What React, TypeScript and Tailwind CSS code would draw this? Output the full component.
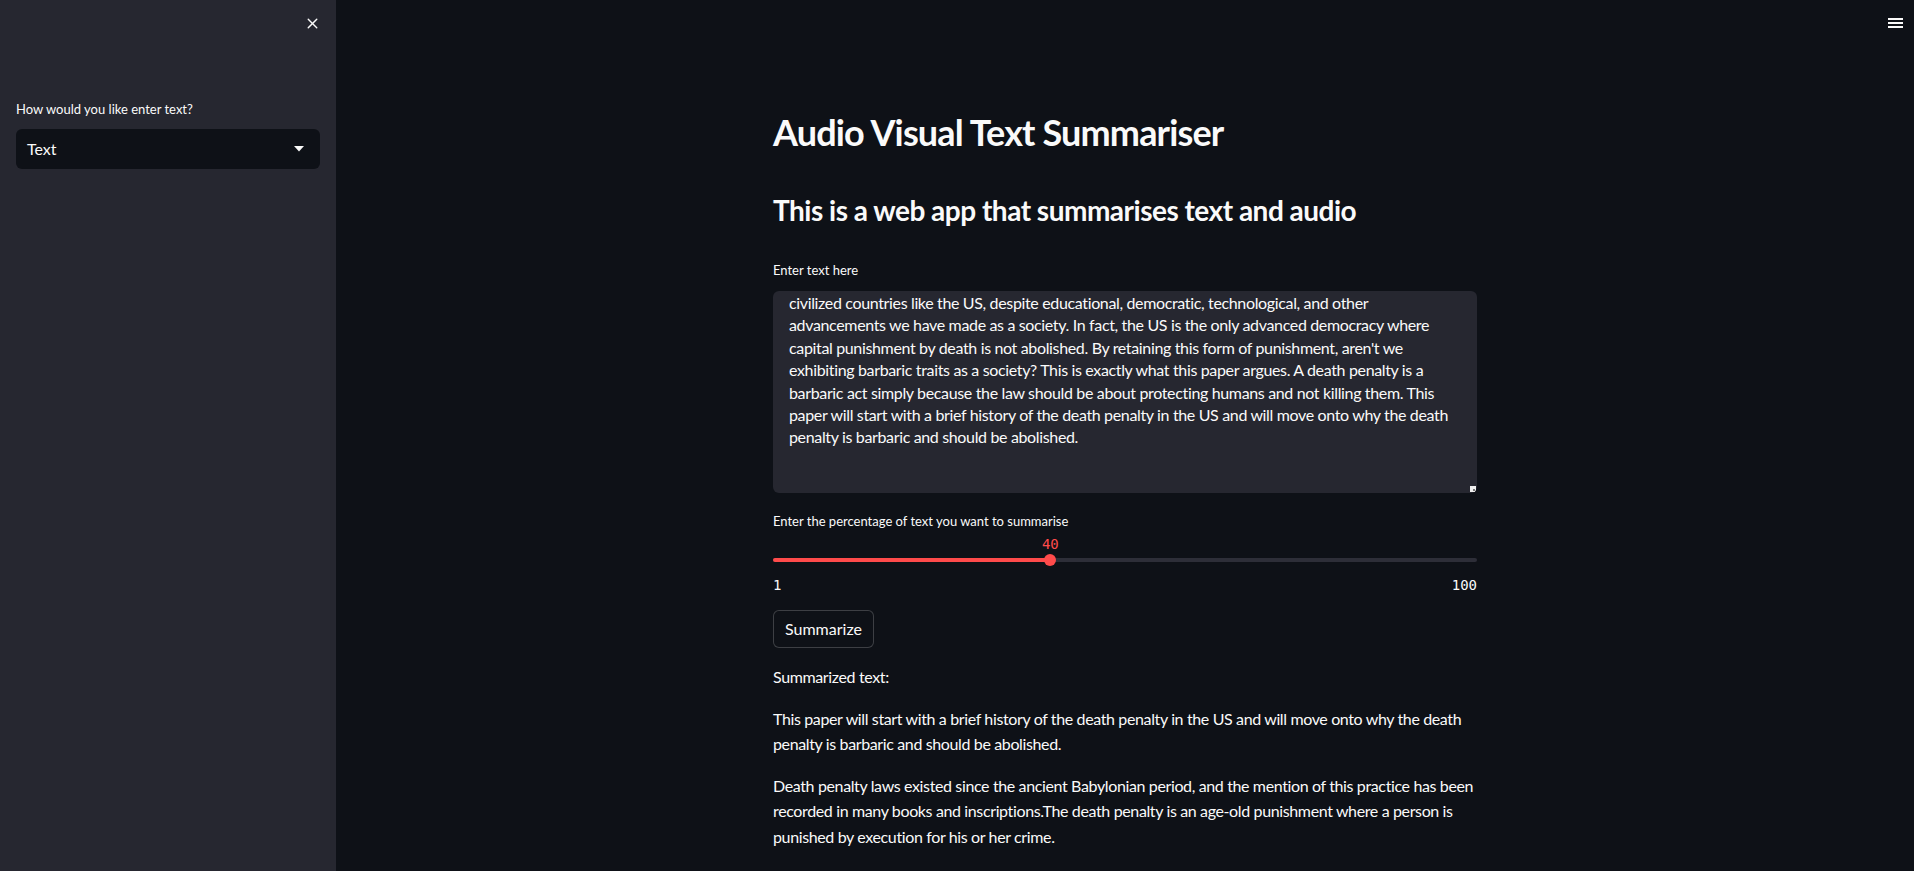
import { X } from "lucide-react";

const inputLines = [
  "civilized countries like the US, despite educational, democratic, technological, and other",
  "advancements we have made as a society. In fact, the US is the only advanced democracy where",
  "capital punishment by death is not abolished. By retaining this form of punishment, aren't we",
  "exhibiting barbaric traits as a society? This is exactly what this paper argues. A death penalty is a",
  "barbaric act simply because the law should be about protecting humans and not killing them. This",
  "paper will start with a brief history of the death penalty in the US and will move onto why the death",
  "penalty is barbaric and should be abolished.",
];

const summary = [
  [
    "This paper will start with a brief history of the death penalty in the US and will move onto why the death",
    "penalty is barbaric and should be abolished.",
  ],
  [
    "Death penalty laws existed since the ancient Babylonian period, and the mention of this practice has been",
    "recorded in many books and inscriptions.The death penalty is an age-old punishment where a person is",
    "punished by execution for his or her crime.",
  ],
];

const sans = "font-['Lato','Noto_Sans',sans-serif]";
const mono = "font-['DejaVu_Sans_Mono','Liberation_Mono',monospace]";

function Sidebar() {
  return (
    <aside className="w-[336px] shrink-0 bg-[#262730] min-h-screen px-4">
      <div className="flex justify-end pt-[15px]">
        <X className="w-[17px] h-[17px] text-[#fafafa] mr-[-1px]" strokeWidth={2} />
      </div>
      <p className="mt-[67px] text-[13px] leading-5 text-[#fafafa]">
        How would you like enter text?
      </p>
      <div className="mt-[10px] h-[40px] rounded-md bg-[#0e1117] flex items-center justify-between pl-[11px] pr-[16px]">
        <span className="text-[16px] text-[#fafafa]">Text</span>
        <svg width="10" height="6" viewBox="0 0 10 6">
          <path d="M0 0h10L5 5.5z" fill="#fafafa" />
        </svg>
      </div>
    </aside>
  );
}

function Slider({ value, min, max }: { value: number; min: number; max: number }) {
  const pct = ((value - min) / (max - min)) * 100;
  return (
    <div>
      <div className="relative h-[20px]">
        <span
          className={`absolute top-0 -translate-x-1/2 text-[14px] leading-5 text-[#ff4b4b] ${mono}`}
          style={{ left: `${pct}%` }}
        >
          {value}
        </span>
      </div>
      <div className="relative h-[12px] flex items-center">
        <div className="w-full h-[4px] rounded-full bg-[#2d2e38]">
          <div className="h-full rounded-full bg-[#ff4b4b]" style={{ width: `${pct}%` }} />
        </div>
        <div
          className="absolute top-0 w-[12px] h-[12px] -translate-x-1/2 rounded-full bg-[#ff4b4b]"
          style={{ left: `${pct}%` }}
        />
      </div>
      <div className={`mt-[9px] flex justify-between text-[14px] leading-5 text-[#fafafa] ${mono}`}>
        <span>{min}</span>
        <span>{max}</span>
      </div>
    </div>
  );
}

export default function App() {
  return (
    <div className={`flex min-h-screen bg-[#0e1117] text-[#fafafa] ${sans}`}>
      <Sidebar />
      <main className="relative flex-1">
        <svg className="absolute top-[17px] right-[11px]" width="15" height="12" viewBox="0 0 15 12">
          <rect x="0" y="1" width="15" height="2" fill="#fafafa" />
          <rect x="0" y="5" width="15" height="2" fill="#fafafa" />
          <rect x="0" y="9" width="15" height="2" fill="#fafafa" />
        </svg>

        <div className="mx-auto w-[704px] pt-[110px]">
          <h1 className="text-[36px] leading-[44px] font-bold tracking-[-0.85px]">
            Audio Visual Text Summariser
          </h1>
          <h2 className="mt-[38px] text-[28px] leading-[36px] font-bold tracking-[-0.5px]">
            This is a web app that summarises text and audio
          </h2>

          <p className="mt-[32px] text-[13px] leading-5">Enter text here</p>
          <div className="relative mt-[11px] h-[202px] rounded-md bg-[#262730] px-4 pt-[1px] overflow-hidden">
            {inputLines.map((l) => (
              <div key={l} className="whitespace-nowrap text-[16px] leading-[22.4px] tracking-[-0.35px]">
                {l}
              </div>
            ))}
            <div className="absolute right-[1px] bottom-[1px] w-[6px] h-[6px] bg-[#f0f0f0]">
              <div className="absolute right-[1px] bottom-[1px] w-[2px] h-[2px] bg-[#777]" />
            </div>
          </div>

          <p className="mt-[18px] text-[13px] leading-5">Enter the percentage of text you want to summarise</p>
          <div className="mt-[3px]">
            <Slider value={40} min={1} max={100} />
          </div>

          <button className="mt-[15px] h-[38px] px-[11px] rounded-md border border-[#fafafa]/20 bg-[#0e1117] text-[16px] text-[#fafafa]">
            Summarize
          </button>

          <div className="mt-[16px] text-[16px] leading-[25.6px] tracking-[-0.37px]">
            <p className="mb-4">Summarized text:</p>
            {summary.map((para, i) => (
              <p key={i} className="mb-4">
                {para.map((l) => (
                  <span key={l} className="block whitespace-nowrap">
                    {l}
                  </span>
                ))}
              </p>
            ))}
          </div>
        </div>
      </main>
    </div>
  );
}
